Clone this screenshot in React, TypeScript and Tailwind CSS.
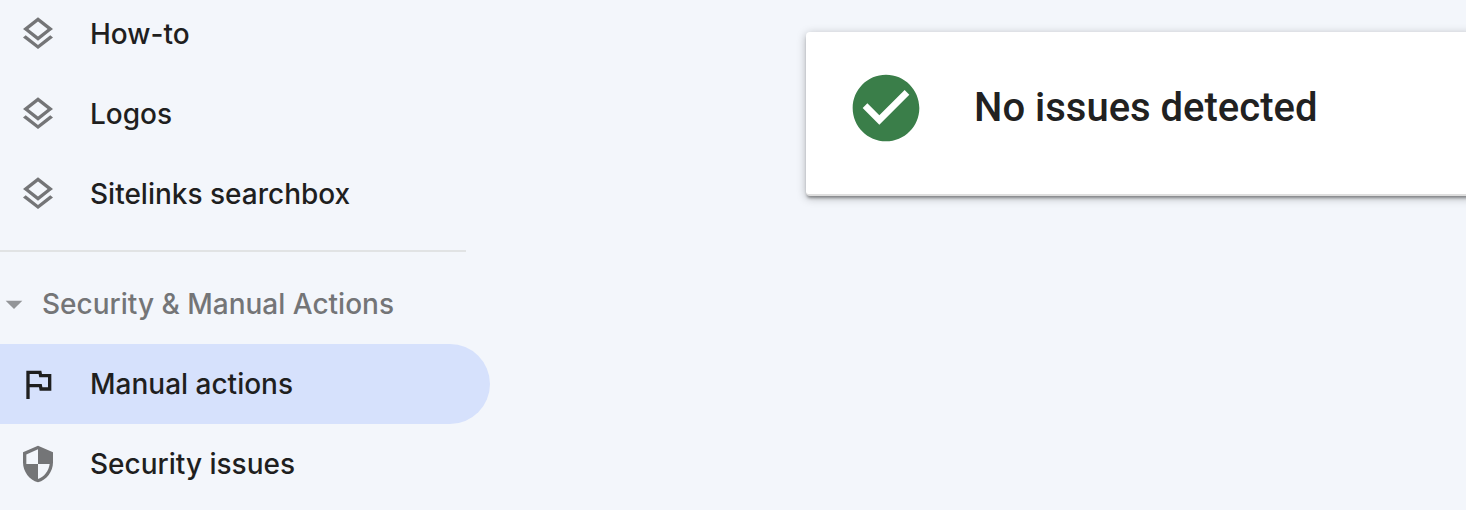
import { ReactNode } from 'react';
import { clsx } from 'clsx';

interface NavItem {
  label: string;
  icon: ReactNode;
  active?: boolean;
}

interface IconProps {
  d: string;
  className?: string;
}

const LAYERS =
  'M11.99 18.54l-7.37-5.73L3 14.07l9 7 9-7-1.63-1.27-7.38 5.74zM12 16l7.36-5.73L21 9l-9-7-9 7 1.63 1.27L12 16zm0-11.47L17.74 9 12 13.47 6.26 9 12 4.53z';
const FLAG = 'M12.36 6l.4 2H18v6h-3.36l-.4-2H7V6h5.36M14 4H5v17h2v-7h5.6l.4 2h7V6h-5.6L14 4z';
const SHIELD =
  'M12 1L3 5v6c0 5.55 3.84 10.74 9 12 5.16-1.26 9-6.45 9-12V5l-9-4zm0 10.99h7c-.53 4.12-3.28 7.79-7 8.94V12H5V6.3l7-3.11v8.8z';
const ARROW_DOWN = 'M7 10l5 5 5-5z';
const CHECK_CIRCLE =
  'M12 2C6.48 2 2 6.48 2 12s4.48 10 10 10 10-4.48 10-10S17.52 2 12 2zm-2 15l-5-5 1.41-1.41L10 14.17l7.59-7.59L19 8l-9 9z';

function Icon({ d, className }: IconProps) {
  return (
    <svg viewBox="0 0 24 24" fill="currentColor" aria-hidden="true" className={clsx('shrink-0', className)}>
      <path d={d} />
    </svg>
  );
}

const enhancements: NavItem[] = [
  { label: 'How-to', icon: <Icon d={LAYERS} className="size-10 text-[#747577]" /> },
  { label: 'Logos', icon: <Icon d={LAYERS} className="size-10 text-[#747577]" /> },
  { label: 'Sitelinks searchbox', icon: <Icon d={LAYERS} className="size-10 text-[#747577]" /> },
];

const security: NavItem[] = [
  { label: 'Manual actions', icon: <Icon d={FLAG} className="size-10 text-[#1f1f1f]" />, active: true },
  { label: 'Security issues', icon: <Icon d={SHIELD} className="size-10 text-[#747577]" /> },
];

function NavList({ items }: { items: NavItem[] }) {
  return (
    <ul>
      {items.map((item) => (
        <li key={item.label}>
          <a
            href="#"
            aria-current={item.active ? 'page' : undefined}
            className={clsx(
              'flex h-20 items-center gap-8 rounded-r-full pl-[18px] text-[#1f1f1f]',
              item.active && 'bg-[#d6e1fc]'
            )}
          >
            {item.icon}
            {item.label}
          </a>
        </li>
      ))}
    </ul>
  );
}

export default function App() {
  return (
    <div className="flex min-h-screen overflow-hidden bg-[#f3f6fb]">
      {/* Sidebar, scrolled part of the way down */}
      <nav className="-mt-1.5 w-[490px] shrink-0 font-['Inter',sans-serif] text-[28px] leading-9 font-medium">
        <NavList items={enhancements} />
        <hr className="mt-4 mr-6 mb-3 border-t-2 border-[#e1e3e4]" />
        <button type="button" aria-expanded="true" className="-ml-1.5 flex h-20 items-center gap-2 text-[#747577]">
          <Icon d={ARROW_DOWN} className="size-10 text-[#939598]" />
          Security &amp; Manual Actions
        </button>
        <NavList items={security} />
      </nav>

      {/* Report status */}
      <main className="min-w-0 flex-1 pt-8 pl-[316px]">
        <section className="-mr-2 flex items-center gap-12 rounded border-b-2 border-[#dedede] bg-white pt-9 pb-[46px] pl-10 shadow-[0_2px_10px_rgba(0,0,0,0.28),0_3px_3px_-1px_rgba(0,0,0,0.35)]">
          <Icon d={CHECK_CIRCLE} className="size-20 text-[#3a7e49]" />
          <h1 className="font-['Roboto',sans-serif] text-[40px] leading-[48px] font-medium whitespace-nowrap text-[#212121]">
            No issues detected
          </h1>
        </section>
      </main>
    </div>
  );
}
